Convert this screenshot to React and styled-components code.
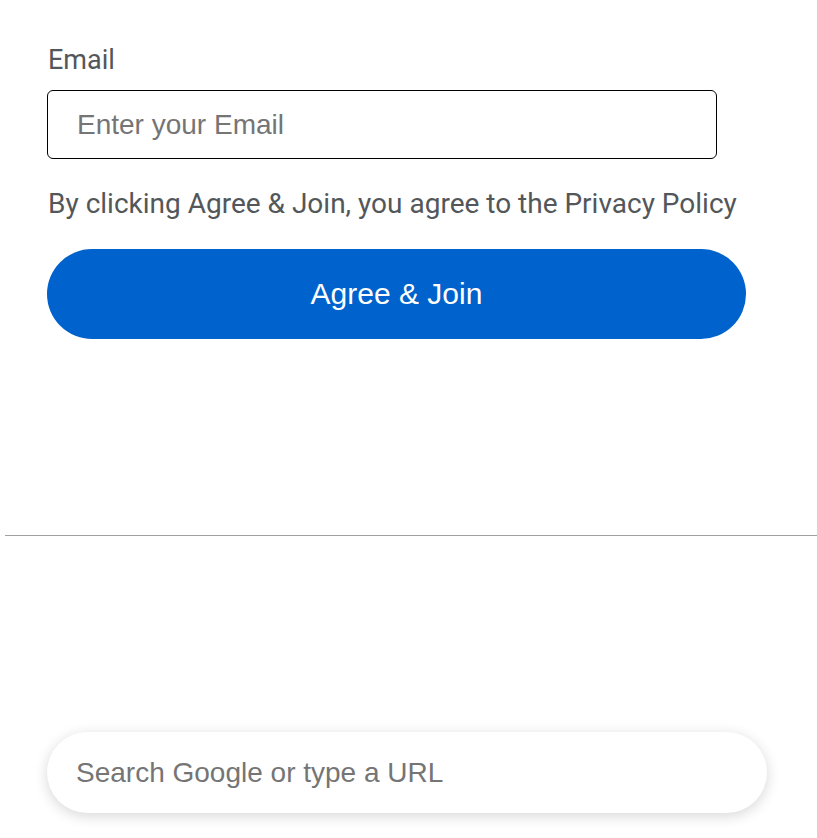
import React from 'react';
import styled, { createGlobalStyle } from 'styled-components';

const GlobalStyle = createGlobalStyle`
	html, body {
		margin: 0;
		padding: 0;
		background: #fff;
	}
	* {
		box-sizing: border-box;
	}
`;

const Page = styled.div`
	width: 817px;
	height: 838px;
	display: flex;
	flex-direction: column;
	overflow: hidden;
`;
const Form = styled.form`
	display: flex;
	flex-direction: column;
	padding: 44px 0 0 47px;
	height: 535px;
`;
const Label = styled.label`
	font-family: Roboto, "Liberation Sans", sans-serif;
	font-size: 27px;
	line-height: 32px;
	color: #53575a;
	margin-left: 1px;
`;
const Input = styled.input`
	margin-top: 14px;
	width: 670px;
	height: 69px;
	border: 1px solid #000;
	border-radius: 6px;
	padding: 0 29px;
	font-family: "Liberation Sans", Arial, sans-serif;
	font-size: 28px;
	color: #333;
	outline: none;
	&::placeholder {
		color: #757575;
	}
`;
const Terms = styled.p`
	margin: 28px 0 0 1px;
	font-family: Roboto, "Liberation Sans", sans-serif;
	font-size: 28px;
	line-height: 34px;
	color: #53575a;
`;
const Button = styled.button`
	margin-top: 28px;
	width: 699px;
	height: 90px;
	border: none;
	border-radius: 45px;
	background: #0062cc;
	color: #fff;
	font-family: "Liberation Sans", Arial, sans-serif;
	font-size: 30px;
	cursor: pointer;
`;
const Divider = styled.hr`
	margin: 0 0 0 5px;
	border: none;
	border-top: 1px solid #a0a0a0;
	height: 0;
`;
const Bottom = styled.div`
	flex: 1;
	display: flex;
	flex-direction: column;
	justify-content: flex-end;
	padding: 0 0 25px 47px;
`;
const Search = styled.input`
	width: 720px;
	height: 81px;
	border: none;
	border-radius: 41px;
	background: #fff;
	box-shadow: 0 3px 14px rgba(0, 0, 0, 0.16);
	padding: 0 29px;
	font-family: "Liberation Sans", Arial, sans-serif;
	font-size: 28px;
	color: #333;
	outline: none;
	&::placeholder {
		color: #757575;
	}
`;

const App = () => {
	return (
		<Page>
			<GlobalStyle />
			<Form onSubmit={e => e.preventDefault()}>
				<Label htmlFor="email">Email</Label>
				<Input id="email" type="email" placeholder="Enter your Email" />
				<Terms>By clicking Agree &amp; Join, you agree to the Privacy Policy</Terms>
				<Button type="submit">Agree &amp; Join</Button>
			</Form>
			<Divider />
			<Bottom>
				<Search type="text" placeholder="Search Google or type a URL" />
			</Bottom>
		</Page>
	)
}

export default App
